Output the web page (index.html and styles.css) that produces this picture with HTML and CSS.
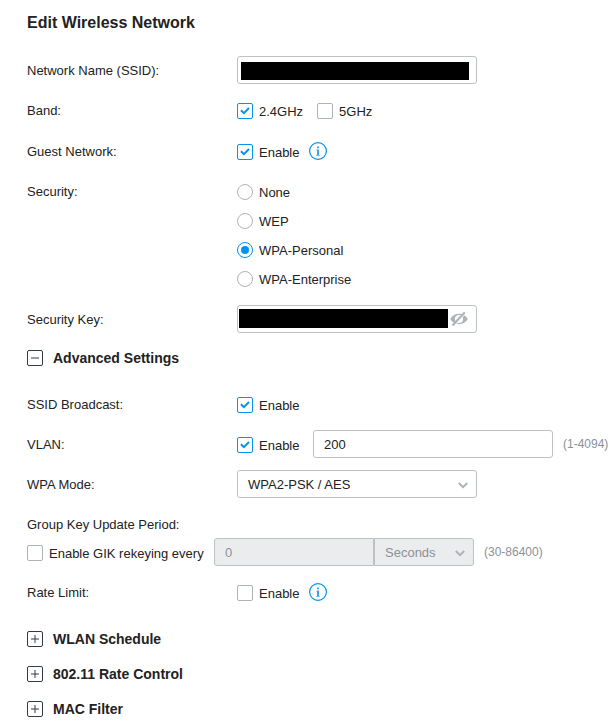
FILE: index.html
```html
<!DOCTYPE html>
<html lang="en">
<head>
<meta charset="utf-8">
<title>Edit Wireless Network</title>
<link rel="stylesheet" href="styles.css">
</head>
<body>
<svg class="defs" aria-hidden="true">
  <symbol id="tick" viewBox="0 0 16 16"><path d="M3.9 7.2 6.900 10.100 12 5" fill="none" stroke="#0492eb" stroke-width="1.900"/></symbol>
  <symbol id="info" viewBox="0 0 18 18"><circle cx="9" cy="9" r="8.4" fill="none" stroke="#0492eb" stroke-width="1.2"/><path d="M8 4.6h2v1.700H8zM7.500 7.600H10v5.400h.8v.8H7.200V13H8V8.400h-.5z" fill="#0492eb" fill-opacity=".8"/></symbol>
  <symbol id="chevron" viewBox="0 0 10 7"><path d="M.8 1 5 5.1 9.2 1" fill="none" stroke="#adb3b8" stroke-width="2"/></symbol>
</svg>
<main class="panel">
  <h1 class="title">Edit Wireless Network</h1>

  <div class="row">
    <span class="label">Network Name (SSID):</span>
    <div class="field field-name"><span class="mask"></span></div>
  </div>
  <div class="row row-band">
    <span class="label">Band:</span>
    <span class="check"><span class="box on"><svg><use href="#tick"/></svg></span>2.4GHz</span>
    <span class="check check-next"><span class="box"></span>5GHz</span>
  </div>
  <div class="row">
    <span class="label">Guest Network:</span>
    <span class="check check-enable"><span class="box on"><svg><use href="#tick"/></svg></span>Enable</span>
    <svg class="info"><use href="#info"/></svg>
  </div>
  <div class="row row-security">
    <span class="label">Security:</span>
    <div class="radios">
      <span class="check"><span class="radio"></span>None</span>
      <span class="check"><span class="radio"></span>WEP</span>
      <span class="check"><span class="radio on"></span>WPA-Personal</span>
      <span class="check"><span class="radio"></span>WPA-Enterprise</span>
    </div>
  </div>
  <div class="row row-key">
    <span class="label">Security Key:</span>
    <div class="field field-key">
      <span class="mask"></span>
      <svg class="eye" viewBox="0 0 18 14"><path d="M.2 7C2.200 3.600 5.200 1.800 9 1.800S15.800 3.600 17.800 7C15.800 10.400 12.800 12.200 9 12.200S2.200 10.400.2 7Z" fill="#adb3b8"/><circle cx="9" cy="7" r="4" fill="#fff"/><path d="M3.700 14.800 16 1" stroke="#fff" stroke-width="1"/><path d="M2.500 13.500 14.800.4" stroke="#adb3b8" stroke-width="2.100"/></svg>
    </div>
  </div>

  <h2 class="section section-open"><span class="toggle minus"></span>Advanced Settings</h2>

  <div class="row">
    <span class="label">SSID Broadcast:</span>
    <span class="check"><span class="box on"><svg><use href="#tick"/></svg></span>Enable</span>
  </div>
  <div class="row">
    <span class="label">VLAN:</span>
    <span class="check check-vlan"><span class="box on"><svg><use href="#tick"/></svg></span>Enable</span>
    <div class="field">200</div>
    <span class="hint">(1-4094)</span>
  </div>
  <div class="row">
    <span class="label">WPA Mode:</span>
    <div class="field select">WPA2-PSK / AES<svg class="chevron"><use href="#chevron"/></svg></div>
  </div>
  <div class="row row-period">
    <span class="label">Group Key Update Period:</span>
  </div>
  <div class="row">
    <span class="check check-gik"><span class="box"></span>Enable GIK rekeying every</span>
    <div class="field disabled amount">0</div>
    <div class="field disabled select unit">Seconds<svg class="chevron"><use href="#chevron"/></svg></div>
    <span class="hint">(30-86400)</span>
  </div>
  <div class="row row-rate">
    <span class="label">Rate Limit:</span>
    <span class="check check-enable"><span class="box"></span>Enable</span>
    <svg class="info"><use href="#info"/></svg>
  </div>

  <h2 class="section"><span class="toggle"></span>WLAN Schedule</h2>
  <h2 class="section"><span class="toggle"></span>802.11 Rate Control</h2>
  <h2 class="section"><span class="toggle"></span>MAC Filter</h2>
</main>
</body>
</html>
```
FILE: styles.css
```css
* { box-sizing: border-box; }
body {
  margin: 0;
  background: #fff;
  color: #222;
  font: 13px/30px "Liberation Sans", Arial, sans-serif;
  white-space: nowrap;
  overflow: hidden;
}
.defs { display: none; }
.panel { padding: 8px 0 0 27px; height: 728px; }
.title { margin: 0 0 18px; font-size: 16px; line-height: 30px; font-weight: bold; }
.row { display: flex; height: 28px; margin-bottom: 12px; }
.row-band { margin-bottom: 13px; }
.row-security { height: 116px; }
.row-key { margin-bottom: 11px; }
.row-period { margin-bottom: 0; }
.row-rate { margin-bottom: 19px; }
.label { width: 210px; flex: none; }

.check { display: flex; align-items: flex-start; gap: 6px; height: 28px; margin-top: 1px; flex: none; }
.check-next { margin-left: 14px; }
.check-enable { width: 72px; }
.check-vlan { width: 76px; }
.check-gik { width: 187px; }
.radios .check { margin-bottom: 1px; margin-top: 0; }
.radios { padding-top: 1px; }
.box { width: 16px; height: 16px; margin-top: 6px; border: 1px solid #adb3b8; border-radius: 2px; display: flex; flex: none; }
.box svg { width: 16px; height: 16px; margin: -1px; flex: none; }
.box.on { border-color: #0492eb; }
.radio { width: 16px; height: 16px; margin-top: 6px; border: 1px solid #adb3b8; border-radius: 50%; display: grid; place-items: center; flex: none; }
.radio.on { border-color: #0492eb; }
.radio.on::after { content: ""; width: 8px; height: 8px; border-radius: 50%; background: #0492eb; }
.info { width: 18px; height: 18px; margin-top: 5px; flex: none; }

.field {
  width: 240px;
  height: 28px;
  flex: none;
  border: 1px solid #bcc1c4;
  border-radius: 3px;
  padding: 0 10px;
  line-height: 27px;
}
.mask { display: block; background: #000; }
.field-name { padding: 5px 0 0 3px; }
.field-name .mask { width: 228px; height: 18px; }
.field-key { padding: 3px 0 0 1px; display: flex; }
.field-key .mask { width: 209px; height: 19px; }
.eye { width: 18px; height: 14px; margin: 3px 0 0 2px; }
.select { display: flex; justify-content: space-between; padding-right: 8px; }
.chevron { width: 10px; height: 7px; margin-top: 11px; }
.disabled { background: #ebecee; color: #8b9196; }
.amount { width: 160px; border-radius: 3px 0 0 3px; }
.unit { width: 100px; border-radius: 0 3px 3px 0; }
.hint { margin-left: 10px; font-size: 12px; line-height: 28px; color: #8b9196; }

.section {
  display: flex;
  align-items: center;
  gap: 10px;
  height: 28px;
  margin: 0 0 7px;
  font-size: 14px;
  font-weight: bold;
}
.section-open { margin-bottom: 18px; }
.toggle {
  width: 16px;
  height: 16px;
  border: 1px solid #333b4a;
  border-radius: 2px;
  flex: none;
  background:
    linear-gradient(rgba(51, 59, 74, .5), rgba(51, 59, 74, .5)) center / 8px 2px no-repeat,
    linear-gradient(rgba(51, 59, 74, .5), rgba(51, 59, 74, .5)) center / 2px 8px no-repeat;
}
.toggle.minus { background: linear-gradient(#979ca3, #979ca3) center / 8px 2px no-repeat; }
```
